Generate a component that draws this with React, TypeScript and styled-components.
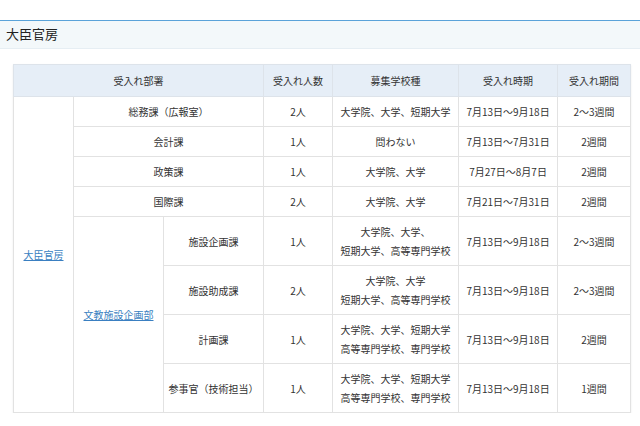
import React from 'react'
import styled, { createGlobalStyle } from 'styled-components'

const Global = createGlobalStyle`
  body { margin: 0; background: #fff; font-family: "Noto Sans CJK JP", "Liberation Sans", sans-serif; color: #333; }
`

const TitleBar = styled.h2`
  margin: 20px 0 0;
  height: 27px;
  border-top: 1px solid #5aa3d9;
  border-bottom: 1px solid #e6eef3;
  background: #f3f8fa;
  font-size: 13px;
  font-weight: normal;
  line-height: 26px;
  padding-left: 6px;
  color: #222;
`

const Wrap = styled.div`
  padding: 15px 10px 0 13px;
`

const Table = styled.table`
  border-collapse: collapse;
  width: 617px;
  table-layout: fixed;
  font-size: 10px;
  box-shadow: 0 1px 2px rgba(0, 0, 0, 0.08);
`

const Th = styled.th`
  background: #e6eef7;
  font-weight: normal;
  height: 29px;
  border: 1px solid #dde3ea;
  text-align: center;
`

const Td = styled.td<{ $h?: number }>`
  border: 1px solid #e2e2e2;
  text-align: center;
  height: ${p => p.$h ?? 29}px;
  line-height: 19px;
  padding: 0;
`

const Link = styled.a`
  color: #3a7fc1;
  text-decoration: underline;
`

const rows1 = [
  ['総務課（広報室）', '2人', '大学院、大学、短期大学', '7月13日～9月18日', '2～3週間'],
  ['会計課', '1人', '問わない', '7月13日～7月31日', '2週間'],
  ['政策課', '1人', '大学院、大学', '7月27日～8月7日', '2週間'],
  ['国際課', '2人', '大学院、大学', '7月21日～7月31日', '2週間'],
]

const rows2: [string, string, string[], string, string][] = [
  ['施設企画課', '1人', ['大学院、大学、', '短期大学、高等専門学校'], '7月13日～9月18日', '2～3週間'],
  ['施設助成課', '2人', ['大学院、大学', '短期大学、高等専門学校'], '7月13日～9月18日', '2～3週間'],
  ['計画課', '1人', ['大学院、大学、短期大学', '高等専門学校、専門学校'], '7月13日～9月18日', '2週間'],
  ['参事官（技術担当）', '1人', ['大学院、大学、短期大学', '高等専門学校、専門学校'], '7月13日～9月18日', '1週間'],
]

export default function App() {
  return (
    <>
      <Global />
      <TitleBar>大臣官房</TitleBar>
      <Wrap>
        <Table>
          <colgroup>
            <col style={{ width: 60 }} />
            <col style={{ width: 90 }} />
            <col style={{ width: 100 }} />
            <col style={{ width: 69 }} />
            <col style={{ width: 126 }} />
            <col style={{ width: 99 }} />
            <col style={{ width: 73 }} />
          </colgroup>
          <thead>
            <tr>
              <Th colSpan={3}>受入れ部署</Th>
              <Th>受入れ人数</Th>
              <Th>募集学校種</Th>
              <Th>受入れ時期</Th>
              <Th>受入れ期間</Th>
            </tr>
          </thead>
          <tbody>
            {rows1.map((r, i) => (
              <tr key={r[0]}>
                {i === 0 && (
                  <Td rowSpan={8}>
                    <Link href="#">大臣官房</Link>
                  </Td>
                )}
                <Td colSpan={2}>{r[0]}</Td>
                <Td>{r[1]}</Td>
                <Td>{r[2]}</Td>
                <Td>{r[3]}</Td>
                <Td>{r[4]}</Td>
              </tr>
            ))}
            {rows2.map((r, i) => (
              <tr key={r[0]}>
                {i === 0 && (
                  <Td rowSpan={4}>
                    <Link href="#">文教施設企画部</Link>
                  </Td>
                )}
                <Td $h={48}>{r[0]}</Td>
                <Td>{r[1]}</Td>
                <Td>
                  {r[2][0]}
                  <br />
                  {r[2][1]}
                </Td>
                <Td>{r[3]}</Td>
                <Td>{r[4]}</Td>
              </tr>
            ))}
          </tbody>
        </Table>
      </Wrap>
    </>
  )
}
